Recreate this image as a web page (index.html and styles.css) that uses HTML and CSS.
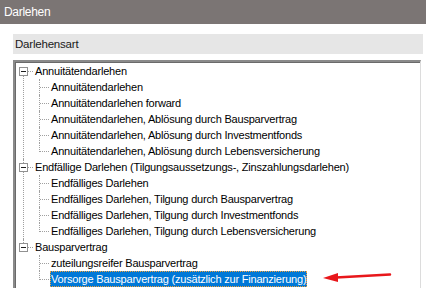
FILE: index.html
```html
<!DOCTYPE html>
<html lang="de">

<head>
    <meta charset="UTF-8">
    <title>Darlehen</title>
    <link rel="stylesheet" href="styles.css">
</head>

<body>

    <div class="titlebar">Darlehen</div>

    <div class="content">
        <div class="group-head">Darlehensart</div>

        <div class="tree">
            <ul class="roots">
                <li class="root">
                    <div class="row"><span class="toggle"></span><span class="label">Annuitätendarlehen</span></div>
                    <ul class="children">
                        <li><div class="row"><span class="label">Annuitätendarlehen</span></div></li>
                        <li><div class="row"><span class="label">Annuitätendarlehen forward</span></div></li>
                        <li><div class="row"><span class="label">Annuitätendarlehen, Ablösung durch Bausparvertrag</span></div></li>
                        <li><div class="row"><span class="label">Annuitätendarlehen, Ablösung durch Investmentfonds</span></div></li>
                        <li><div class="row"><span class="label">Annuitätendarlehen, Ablösung durch Lebensversicherung</span></div></li>
                    </ul>
                </li>
                <li class="root">
                    <div class="row"><span class="toggle"></span><span class="label">Endfällige Darlehen (Tilgungsaussetzungs-, Zinszahlungsdarlehen)</span></div>
                    <ul class="children">
                        <li><div class="row"><span class="label">Endfälliges Darlehen</span></div></li>
                        <li><div class="row"><span class="label">Endfälliges Darlehen, Tilgung durch Bausparvertrag</span></div></li>
                        <li><div class="row"><span class="label">Endfälliges Darlehen, Tilgung durch Investmentfonds</span></div></li>
                        <li><div class="row"><span class="label">Endfälliges Darlehen, Tilgung durch Lebensversicherung</span></div></li>
                    </ul>
                </li>
                <li class="root">
                    <div class="row"><span class="toggle"></span><span class="label">Bausparvertrag</span></div>
                    <ul class="children">
                        <li><div class="row"><span class="label">zuteilungsreifer Bausparvertrag</span></div></li>
                        <li>
                            <div class="row">
                                <span class="label selected">Vorsorge Bausparvertrag (zusätzlich zur Finanzierung)</span>
                                <!-- red marker arrow -->
                                <svg class="arrow" width="72" height="14" viewBox="0 0 72 14">
                                    <path d="M14 7.5 L68 4.5" stroke="#e8171b" stroke-width="2.5" stroke-linecap="round" fill="none"/>
                                    <path d="M1 8 L16 3 L16 12 Z" fill="#e8171b"/>
                                </svg>
                            </div>
                        </li>
                    </ul>
                </li>
            </ul>
        </div>
    </div>

</body>

</html>
```

FILE: styles.css
```css
/* Window */
body {
    margin: 0;
    padding: 0;
    background-color: #ffffff;
    font-family: "Liberation Sans", Arial, sans-serif;
    font-size: 11px;
    letter-spacing: -0.2px;
    color: #000;
    overflow: hidden;
}

.titlebar {
    height: 24px;
    line-height: 24px;
    padding-left: 4px;
    background-color: #7b7574;
    color: #ffffff;
    font-size: 12px;
    letter-spacing: -0.3px;
}

.content {
    padding: 10px 3px 0 13px;
    border-left: 1px solid #e0e0e0;
    margin-left: -1px;
}

/* Group header */
.group-head {
    height: 20px;
    line-height: 20px;
    padding-left: 2px;
    background-color: #e6e6e6;
    color: #1a1a1a;
    font-size: 11.5px;
}

/* Tree view */
.tree {
    margin-top: 6px;
    margin-right: 2px;
    height: 225px;
    overflow: hidden;
    border-top: 2px solid #8a8a8a;
    border-left: 2px solid #8a8a8a;
    border-right: 1px solid #dcdcdc;
    box-shadow: inset 1px 1px 0 #6a6a6a;
    padding-top: 1px;
}

.tree ul {
    list-style: none;
    margin: 0;
    padding: 0;
}

.tree li {
    position: relative;
}

.row {
    height: 16px;
    display: flex;
    align-items: center;
    white-space: nowrap;
}

.label {
    padding: 0 1px;
    line-height: 16px;
    height: 16px;
}

.label.selected {
    background-color: #0078d7;
    color: #ffffff;
    outline: 1px dotted #f2a13a;
    outline-offset: -1px;
}

/* Root nodes with +/- boxes */
.toggle {
    position: relative;
    z-index: 1;
    width: 7px;
    height: 7px;
    margin-left: 4px;
    margin-right: 6px;
    border: 1px solid #919191;
    background-color: #ffffff;
}

.toggle::after {
    content: "";
    position: absolute;
    left: 1px;
    top: 3px;
    width: 5px;
    height: 1px;
    background-color: #1e1e1e;
}

.root::before {
    content: "";
    position: absolute;
    left: 8px;
    top: 0;
    height: 100%;
    border-left: 1px dotted #a0a0a0;
}

.root:first-child::before {
    top: 8px;
    height: calc(100% - 8px);
}

.root:last-child::before {
    height: 8px;
}

.root > .row::after {
    content: "";
    position: absolute;
    left: 13px;
    top: 8px;
    width: 5px;
    border-top: 1px dotted #a0a0a0;
}

/* Child nodes */
.children {
    padding-left: 35px !important;
}

.children li::before {
    content: "";
    position: absolute;
    left: -11px;
    top: 0;
    height: 100%;
    border-left: 1px dotted #a0a0a0;
}

.children li:last-child::before {
    height: 9px;
}

.children li::after {
    content: "";
    position: absolute;
    left: -10px;
    top: 8px;
    width: 9px;
    border-top: 1px dotted #a0a0a0;
}

/* Red marker arrow next to the selection */
.arrow {
    margin-left: 15px;
    margin-top: -4px;
}
```
